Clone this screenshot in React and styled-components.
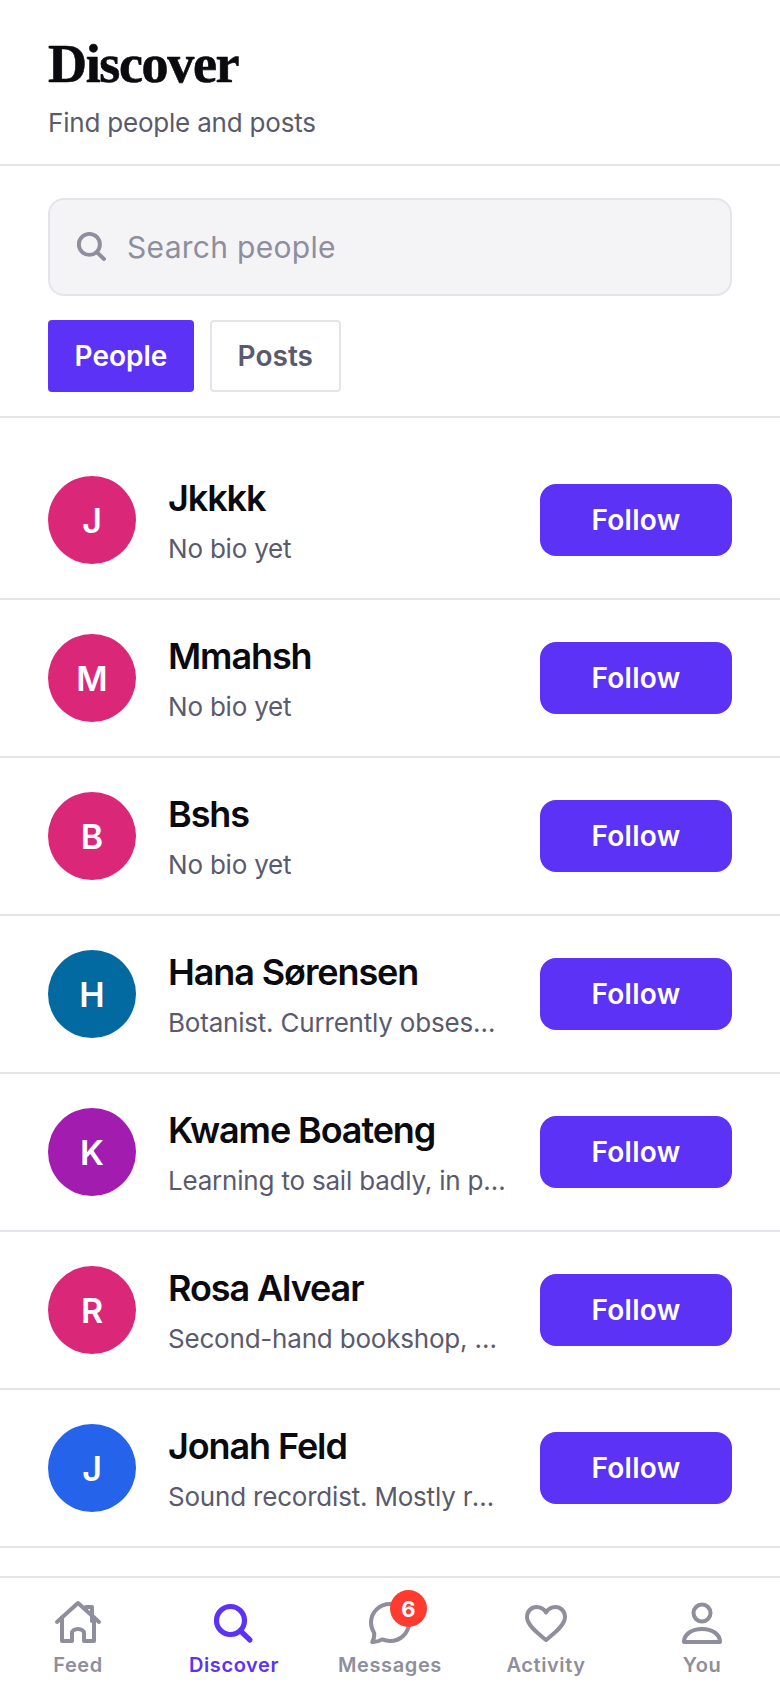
import React from 'react';
import styled, { createGlobalStyle } from 'styled-components';

const GlobalStyle = createGlobalStyle`
  html, body {
    margin: 0;
    padding: 0;
    background: #fff;
    font-family: Inter, "Noto Sans", sans-serif;
  }
  * { box-sizing: border-box; }
`;

const Screen = styled.div`
  height: 1688px;
  display: flex;
  flex-direction: column;
  overflow: hidden;
  background: #fff;
`;

const Header = styled.header`
  height: 166px;
  flex-shrink: 0;
  padding: 34px 48px 0;
  border-bottom: 2px solid #e4e4ea;
`;

const Title = styled.h1`
  margin: 0;
  font-family: "Liberation Serif", serif;
  font-size: 54px;
  line-height: 60px;
  font-weight: 700;
  letter-spacing: -1.35px;
  color: #0a0a0f;
  -webkit-text-stroke: 0.6px #0a0a0f;
`;

const Subtitle = styled.p`
  margin: 12px 0 0;
  font-size: 26px;
  line-height: 34px;
  letter-spacing: -0.2px;
  color: #5a5a6e;
`;

const SearchSection = styled.section`
  flex-shrink: 0;
  padding: 32px 48px 24px;
  border-bottom: 2px solid #e4e4ea;
`;

const SearchBox = styled.div`
  height: 98px;
  display: flex;
  align-items: center;
  gap: 17px;
  padding: 0 24px;
  background: #f4f4f7;
  border: 2px solid #e4e4ea;
  border-radius: 16px;
  color: #8e8e9c;
  font-size: 30px;
  letter-spacing: 0.3px;
`;

const Chips = styled.div`
  display: flex;
  gap: 16px;
  margin-top: 24px;
`;

const Chip = styled.button`
  height: 72px;
  padding: 0 ${p => (p.$active ? 26.6 : 25.6)}px;
  border: ${p => (p.$active ? 'none' : '2px solid #e4e4ea')};
  border-radius: 4px;
  background: ${p => (p.$active ? '#5b32f6' : '#fff')};
  color: ${p => (p.$active ? '#fff' : '#5a5a6e')};
  font-family: inherit;
  font-size: 28px;
  font-weight: 600;
`;

const List = styled.div`
  flex: 1;
  min-height: 0;
  overflow: hidden;
  padding-top: 24px;
`;

const Row = styled.div`
  display: flex;
  align-items: center;
  gap: 32px;
  height: 158px;
  padding: 0 48px;
  border-bottom: 2px solid #e4e4ea;
`;

const Avatar = styled.div`
  width: 88px;
  height: 88px;
  flex-shrink: 0;
  border-radius: 50%;
  display: flex;
  align-items: center;
  justify-content: center;
  background: ${p => p.$color};
  color: #fff;
  font-size: 34px;
  font-weight: 600;
`;

const Info = styled.div`
  flex: 1;
  min-width: 0;
  padding-top: 2px;
`;

const Name = styled.div`
  font-size: 36px;
  line-height: 42px;
  font-weight: 600;
  letter-spacing: -1.1px;
  color: #0a0a0f;
  white-space: nowrap;
`;

const Bio = styled.div`
  margin-top: 13px;
  font-size: 26px;
  line-height: 34px;
  letter-spacing: -0.2px;
  color: #5a5a6e;
  white-space: nowrap;
  overflow: hidden;
  text-overflow: ellipsis;
`;

const FollowButton = styled.button`
  width: 192px;
  height: 72px;
  flex-shrink: 0;
  border: none;
  border-radius: 16px;
  background: #5b32f6;
  color: #fff;
  font-family: inherit;
  font-size: 28px;
  font-weight: 600;
  letter-spacing: 0.3px;
`;

const Nav = styled.nav`
  height: 112px;
  flex-shrink: 0;
  display: grid;
  grid-template-columns: repeat(5, 1fr);
  border-top: 2px solid #e4e4ea;
  background: #fff;
`;

const NavItem = styled.div`
  display: flex;
  flex-direction: column;
  align-items: center;
  padding-top: 22px;
  color: ${p => (p.$active ? '#5b32f6' : '#8e8e9c')};
  font-size: 20px;
  font-weight: 600;
  letter-spacing: 0.6px;
`;

const IconWrap = styled.div`
  position: relative;
  width: 48px;
  height: 48px;
  margin-bottom: 5px;
`;

const Badge = styled.span`
  position: absolute;
  top: -10px;
  left: 24px;
  width: 37px;
  height: 37px;
  border-radius: 50%;
  background: #ff3b30;
  color: #fff;
  font-size: 22px;
  font-weight: 700;
  letter-spacing: 0;
  display: flex;
  align-items: center;
  justify-content: center;
`;

const Svg = ({ size = 48, width = 2, children }) => (
  <svg width={size} height={size} viewBox="0 0 24 24" fill="none" stroke="currentColor"
    strokeWidth={width} strokeLinecap="round" strokeLinejoin="round">
    {children}
  </svg>
);

const SearchIcon = ({ size, width }) => (
  <Svg size={size} width={width}>
    <circle cx="10.250" cy="10.250" r="7" />
    <path d="M15.300 15.500 20 20" />
  </Svg>
);

const HomeIcon = () => (
  <Svg>
    <path d="M1.500 11 12 1.500 22.500 11" />
    <path d="M4 8.800V20.500h5v-4a3 2 0 0 1 6 0v4h5V8.800" />
    <path d="M16 5V3.500h3v7" />
  </Svg>
);

const ChatIcon = () => (
  <Svg>
    <path d="M12 2C6.800 2 2.500 6 2.500 11.300c0 2 .6 3.700 1.600 5.200.2 1.500-.1 3-1 4.500 1.800.1 3.500-.4 5-1.300 1.200.5 2.500.8 3.900.8 5.200 0 9.500-4 9.500-9.200C21.500 6 17.200 2 12 2z" />
  </Svg>
);

const HeartIcon = () => (
  <Svg>
    <path d="M12 20C9 17.400 2.500 13 2.500 8.500 2.500 5.500 4.800 3.500 7.300 3.500c1.900 0 3.700 1 4.700 2.800 1-1.800 2.800-2.800 4.700-2.800 2.500 0 4.800 2 4.800 5C21.500 13 15 17.400 12 20z" />
  </Svg>
);

const UserIcon = () => (
  <Svg>
    <circle cx="12" cy="6.500" r="4.250" />
    <path d="M3 21c0-4 4-6.500 9-6.500s9 2.500 9 6.500z" />
  </Svg>
);

const PEOPLE = [
  { initial: 'J', name: 'Jkkkk', bio: 'No bio yet', color: '#db2777' },
  { initial: 'M', name: 'Mmahsh', bio: 'No bio yet', color: '#db2777' },
  { initial: 'B', name: 'Bshs', bio: 'No bio yet', color: '#db2777' },
  { initial: 'H', name: 'Hana Sørensen', bio: 'Botanist. Currently obsessed with ferns and moss', color: '#0369a1' },
  { initial: 'K', name: 'Kwame Boateng', bio: 'Learning to sail badly, in public and on purpose', color: '#a21caf' },
  { initial: 'R', name: 'Rosa Alvear', bio: 'Second-hand bookshop, open most afternoons', color: '#db2777' },
  { initial: 'J', name: 'Jonah Feld', bio: 'Sound recordist. Mostly rooms and rain', color: '#2563eb' },
  { initial: 'A', name: 'Ana Ruiz', bio: 'No bio yet', color: '#db2777' },
];

const App = () => (
  <Screen>
    <GlobalStyle />
    <Header>
      <Title>Discover</Title>
      <Subtitle>Find people and posts</Subtitle>
    </Header>
    <SearchSection>
      <SearchBox>
        <SearchIcon size={36} width={2.6} />
        <span>Search people</span>
      </SearchBox>
      <Chips>
        <Chip $active>People</Chip>
        <Chip>Posts</Chip>
      </Chips>
    </SearchSection>
    <List>
      {PEOPLE.map((person, index) => (
        <Row key={index}>
          <Avatar $color={person.color}>{person.initial}</Avatar>
          <Info>
            <Name>{person.name}</Name>
            <Bio>{person.bio}</Bio>
          </Info>
          <FollowButton>Follow</FollowButton>
        </Row>
      ))}
    </List>
    <Nav>
      <NavItem><IconWrap><HomeIcon /></IconWrap>Feed</NavItem>
      <NavItem $active><IconWrap><SearchIcon size={48} width={2.6} /></IconWrap>Discover</NavItem>
      <NavItem><IconWrap><ChatIcon /><Badge>6</Badge></IconWrap>Messages</NavItem>
      <NavItem><IconWrap><HeartIcon /></IconWrap>Activity</NavItem>
      <NavItem><IconWrap><UserIcon /></IconWrap>You</NavItem>
    </Nav>
  </Screen>
);

export default App;
